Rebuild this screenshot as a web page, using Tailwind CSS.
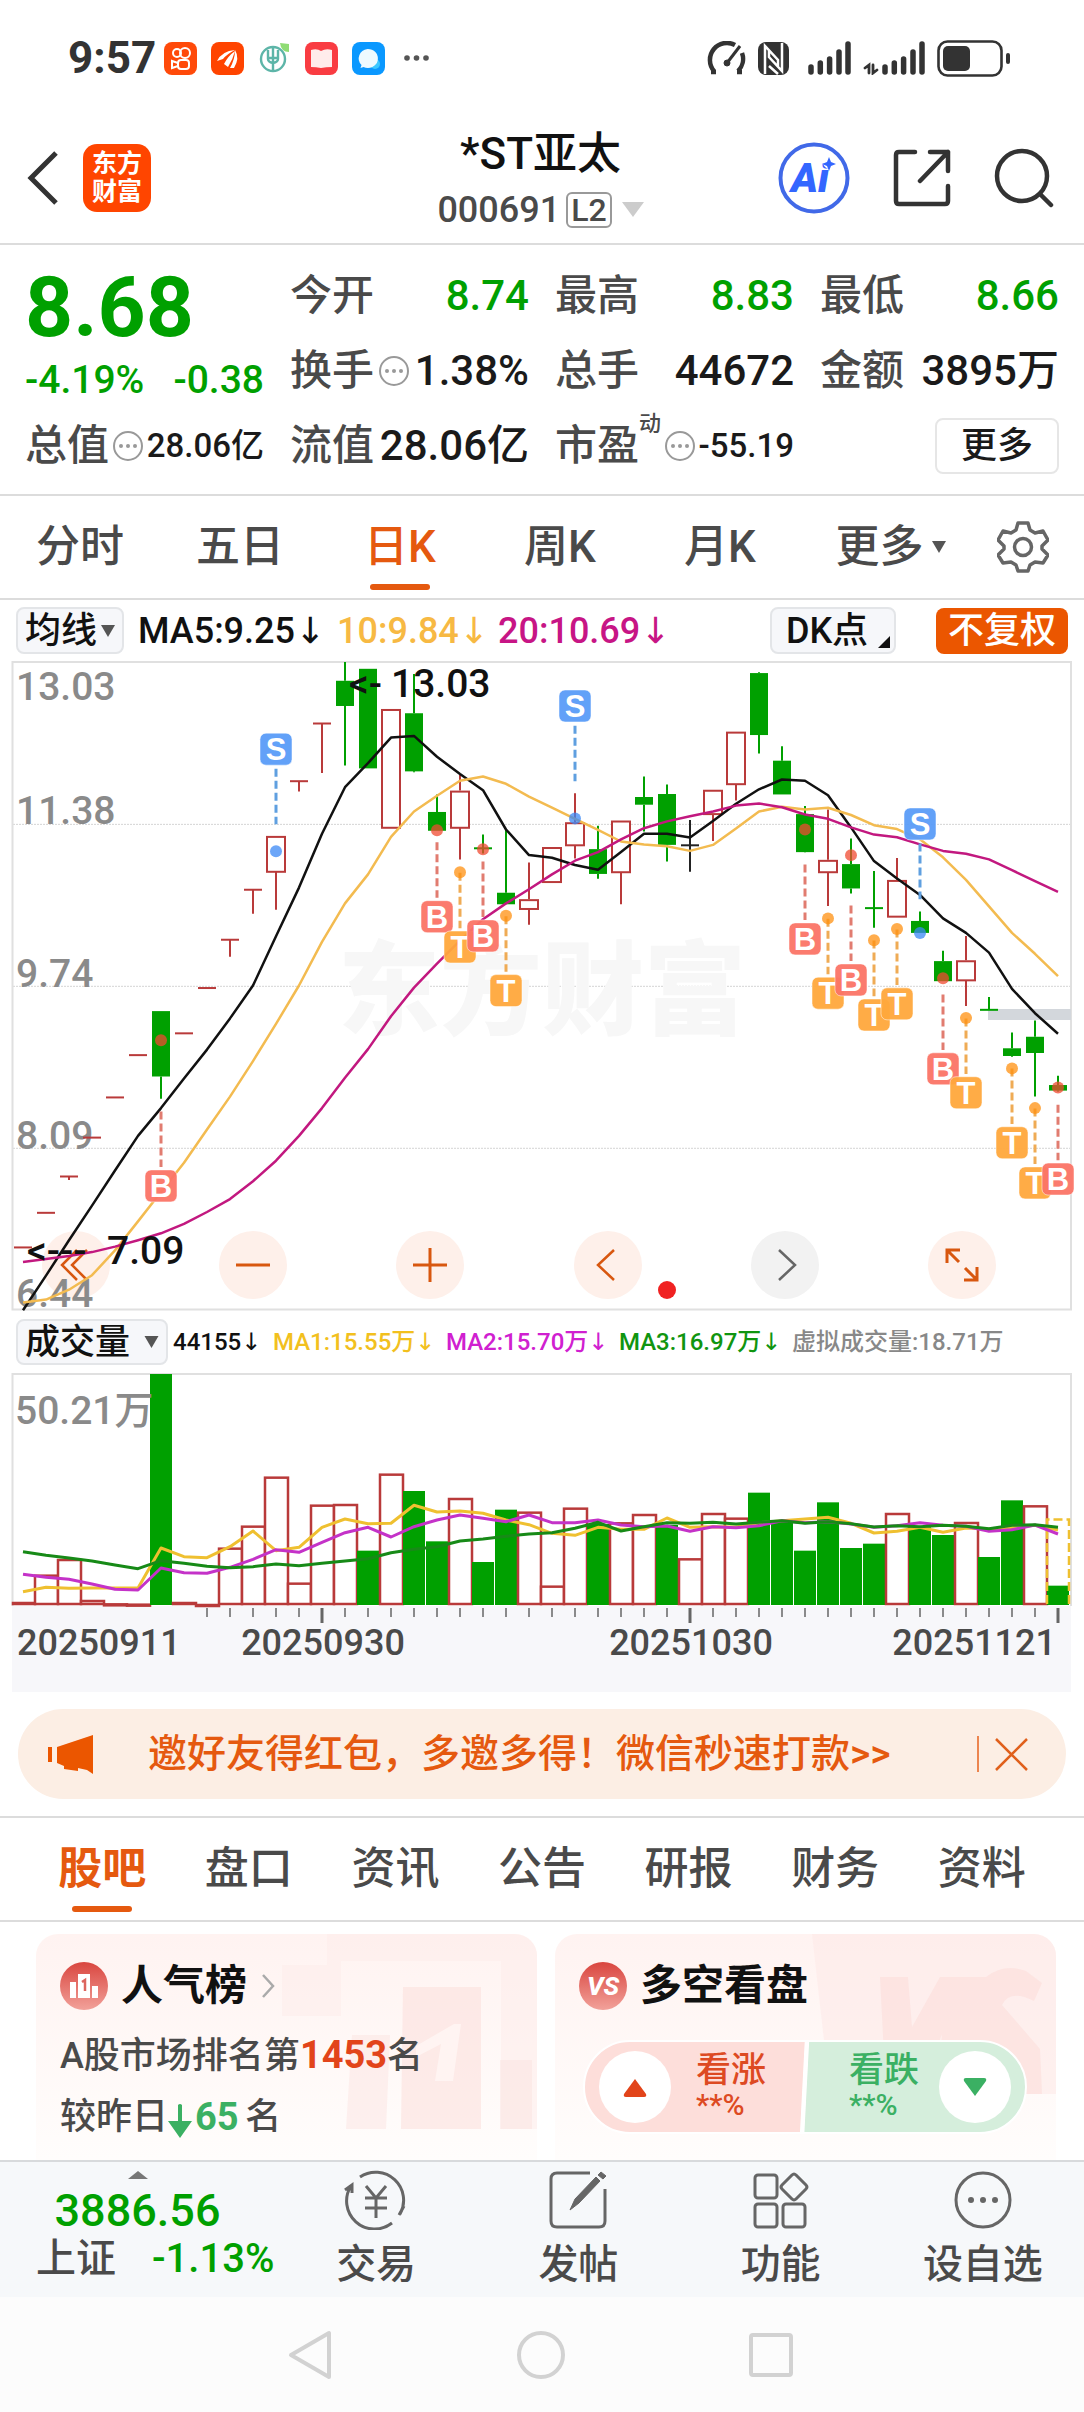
<!DOCTYPE html>
<html lang="zh-CN">
<head>
<meta charset="utf-8">
<meta name="viewport" content="width=device-width, initial-scale=1">
<title>*ST亚太 000691</title>
<script src="https://cdn.jsdelivr.net/npm/@tailwindcss/browser@4"></script>
</head>
<body class="min-h-screen flex flex-col bg-white font-['Roboto','Noto_Sans_CJK_SC',sans-serif] text-[#4a4a4a] font-medium leading-none">

<!-- system status bar -->
<div class="h-28 flex items-center justify-between pl-[68px] pr-[70px] pt-1 text-[#333]">
  <div class="flex items-center gap-[14px]">
    <span class="w-[82px] text-[44px] font-bold">9:57</span>
    <svg class="size-[33px]" viewBox="0 0 33 33" fill="none" stroke="#fff" stroke-width="2"><rect width="33" height="33" rx="8" fill="#ff4a0a" stroke="none"/><circle cx="13" cy="11" r="4"/><circle cx="21" cy="11" r="5"/><rect x="14" y="18" width="11" height="9" rx="3"/><path d="M14 21l-6-2v7l6-2"/></svg>
    <svg class="size-[33px]" viewBox="0 0 33 33"><rect width="33" height="33" rx="8" fill="#ff4400"/><path d="M6 19Q11 9 24 8Q16 12 12 17ZM13 22Q17 14 24 9Q22 17 17 25ZM19 26Q24 17 24 8Q29 16 23 26Z" fill="#fff"/></svg>
    <svg class="size-[33px]" viewBox="0 0 33 33" fill="none" stroke="#5db5a8" stroke-width="2.4"><circle cx="15" cy="17" r="12"/><path d="M15 5v24M10 8v9q0 3 5 4M20 8v9q0 3-5 4M11 16h8"/><path d="M22 1l9 1v8q-8 0-9-9z" fill="#8fdc74" stroke="none"/></svg>
    <svg class="size-[33px]" viewBox="0 0 33 33"><rect width="33" height="33" rx="8" fill="#f93c42"/><path d="M6 8q6-2 10 1q5-3 11-1v17q-6 0-11 1q-5-1-10-1z" fill="#ffeceb"/></svg>
    <svg class="size-[33px]" viewBox="0 0 33 33"><rect width="33" height="33" rx="8" fill="#0a98ff"/><circle cx="23" cy="22" r="5" fill="#3cc8ff"/><path d="M15.500 7a10 9.500 0 1 1-4 18l-3 1 1-3a10 9.500 0 0 1 6-16z" fill="#eefaff"/></svg>
    <svg class="w-[25px] h-[6px] ml-[5px]" viewBox="0 0 25 6" fill="#555"><circle cx="3" cy="3" r="2.800"/><circle cx="12.500" cy="3" r="2.800"/><circle cx="22" cy="3" r="2.800"/></svg>
  </div>
  <div class="flex items-center gap-3">
    <svg class="w-[39px] h-[34px]" viewBox="0 0 39 34" fill="none" stroke="#333" stroke-width="4.500"><path d="M4 31h5M7 30A17 17 0 0 1 28 4M35 12a17 17 0 0 1-4 18M30 31h5"/><path d="M20 22L33 5" stroke-width="3"/><circle cx="20" cy="22" r="3" fill="#333" stroke-width="1"/></svg>
    <svg class="w-[31px] h-[33px]" viewBox="0 0 31 33"><rect width="31" height="33" rx="8" fill="#333"/><path d="M7 32V4l13 14v6M24 1v28L11 15V8M11 24l9 8" fill="none" stroke="#fff" stroke-width="2.500"/></svg>
    <svg class="w-[43px] h-[34px] ml-[7px]" viewBox="0 0 43 34" stroke="#333" stroke-width="5.500" stroke-linecap="round"><path d="M3 26v5M12.300 22v9M21.600 18v13M31 11v20M40 3v28"/></svg>
    <svg class="w-[62px] h-[34px]" viewBox="0 0 62 34" stroke="#333" stroke-width="5.500" stroke-linecap="round" fill="none"><path d="M22 26v5M31.300 22v9M40.600 18v13M50 11v20M59 3v28"/><path d="M2 27l4-3v8M14 29l-4 3v-8" stroke-width="2.800"/></svg>
    <svg class="w-[77px] h-[37px]" viewBox="0 0 77 37"><rect x="1.500" y="1.500" width="63" height="34" rx="9" fill="none" stroke="#333" stroke-width="2.600"/><rect x="6" y="6" width="27" height="25" rx="5" fill="#333"/><rect x="69" y="13" width="4" height="11" rx="2" fill="#333"/></svg>
  </div>
</div>

<!-- stock header -->
<header class="h-[133px] pl-[27px] pr-[30px] grid grid-cols-[1fr_auto_1fr] items-center border-b-2 border-[#dcdcdc]">
  <div class="flex items-center gap-6">
    <button aria-label="返回"><svg class="w-8 h-[56px]" viewBox="0 0 32 56" fill="none" stroke="#333" stroke-width="5"><path d="M29 3L4 28l25 25"/></svg></button>
    <a href="#" class="size-[68px] rounded-[14px] bg-[#ff4500] text-white text-[25px] leading-7 font-bold flex items-center justify-center text-center">东方<br>财富</a>
  </div>
  <div class="flex flex-col items-center gap-4 pt-2">
    <h1 class="text-[44px] text-[#111]">*ST亚太</h1>
    <button class="flex items-center gap-[10px] text-[36px] mb-1">000691<span class="h-9 px-[3px] border-2 border-[#999] rounded-md text-[32px] flex items-center -ml-1">L2</span><svg class="w-[22px] h-[15px]" viewBox="0 0 22 15"><path d="M0 0h22L11 15z" fill="#ccc"/></svg></button>
  </div>
  <div class="flex items-center justify-end gap-[43px]">
    <button aria-label="AI"><svg class="size-[72px]" viewBox="0 0 72 72"><circle cx="36" cy="36" r="33.500" fill="none" stroke="#4169e8" stroke-width="4"/><text x="13" y="50" font-size="41" font-weight="900" font-style="italic" fill="#3366ff">Ai</text><circle cx="52" cy="20" r="7" fill="#fff"/><path d="M51 15l2 5 5 2-5 2-2 5-2-5-5-2 5-2z" fill="#3366ff"/></svg></button>
    <button aria-label="分享"><svg class="size-[58px]" viewBox="0 0 58 58" fill="none" stroke="#333" stroke-width="4.500" stroke-linecap="round" stroke-linejoin="round"><path d="M22 3H6q-3 0-3 3v46q0 3 3 3h46q3 0 3-3V37M37 3h18v19M55 3L27 32"/></svg></button>
    <button aria-label="搜索"><svg class="size-[60px]" viewBox="0 0 60 60" fill="none" stroke="#333" stroke-width="4.500" stroke-linecap="round"><circle cx="28" cy="28" r="25"/><path d="M46 46l11 11"/></svg></button>
  </div>
</header>

<!-- quote summary -->
<section class="px-[25px] pt-[13px] pb-[11px] grid grid-cols-4 grid-rows-[75px_75px_75px] gap-x-[26px] items-center border-b-2 border-[#dcdcdc] text-[42px]">
  <div class="row-span-2 self-stretch flex flex-col justify-between pt-[8px] pb-2 text-[#00a000]">
    <strong class="text-[84px] font-bold">8.68</strong>
    <div class="flex justify-between text-[39px]"><span>-4.19%</span><span>-0.38</span></div>
  </div>
  <div class="flex justify-between items-center"><span>今开</span><span class="text-[#00a000]">8.74</span></div>
  <div class="flex justify-between items-center"><span>最高</span><span class="text-[#00a000]">8.83</span></div>
  <div class="flex justify-between items-center"><span>最低</span><span class="text-[#00a000]">8.66</span></div>
  <div class="flex justify-between items-center"><span>换手</span><svg class="size-8" viewBox="0 0 32 32" fill="#999"><circle cx="16" cy="16" r="14" fill="none" stroke="#999" stroke-width="2"/><circle cx="9" cy="16" r="2"/><circle cx="16" cy="16" r="2"/><circle cx="23" cy="16" r="2"/></svg><span class="text-[#1a1a1a]">1.38%</span></div>
  <div class="flex justify-between items-center"><span>总手</span><span class="text-[#1a1a1a]">44672</span></div>
  <div class="flex justify-between items-center"><span>金额</span><span class="text-[#1a1a1a]">3895万</span></div>
  <div class="flex justify-between items-center"><span>总值</span><svg class="size-8" viewBox="0 0 32 32" fill="#999"><circle cx="16" cy="16" r="14" fill="none" stroke="#999" stroke-width="2"/><circle cx="9" cy="16" r="2"/><circle cx="16" cy="16" r="2"/><circle cx="23" cy="16" r="2"/></svg><span class="text-[#1a1a1a] text-[33px]">28.06亿</span></div>
  <div class="flex justify-between items-center"><span>流值</span><span class="text-[#1a1a1a]">28.06亿</span></div>
  <div class="flex justify-between items-center"><span class="flex">市盈<sup class="text-[22px] top-0 -mt-3 leading-none">动</sup></span><svg class="size-8" viewBox="0 0 32 32" fill="#999"><circle cx="16" cy="16" r="14" fill="none" stroke="#999" stroke-width="2"/><circle cx="9" cy="16" r="2"/><circle cx="16" cy="16" r="2"/><circle cx="23" cy="16" r="2"/></svg><span class="text-[#1a1a1a] text-[33px]">-55.19</span></div>
  <button class="justify-self-end w-[124px] h-14 border-2 border-[#e6e6e6] rounded-lg text-[36px] text-[#1a1a1a]">更多</button>
</section>

<!-- chart period -->
<nav class="h-[104px] grid grid-cols-[160fr_160fr_160fr_160fr_160fr_181fr_103fr] items-center justify-items-center border-b-2 border-[#dcdcdc] text-[44px]">
  <a href="#">分时</a>
  <a href="#">五日</a>
  <a href="#" class="relative text-[#e5590f]">日K<span class="absolute left-1/2 -ml-[30px] -bottom-[21px] w-[60px] h-[6px] rounded-full bg-[#e5590f]"></span></a>
  <a href="#">周K</a>
  <a href="#">月K</a>
  <a href="#" class="flex items-center gap-2">更多<svg class="w-[14px] h-3" viewBox="0 0 14 12"><path d="M0 0h14L7 12z" fill="#555"/></svg></a>
  <button aria-label="设置" class="pr-5"><svg class="size-[52px]" viewBox="0 0 52 52" fill="none" stroke="#666" stroke-width="3.500" stroke-linejoin="round"><path d="M21 2h10l2 7 5 3 8-2 5 9-6 6v3l6 6-5 8-8-1-5 3-2 6H21l-2-6-5-3-8 1-5-8 6-6v-3l-6-6 5-9 8 2 5-3z"/><circle cx="26" cy="26" r="8.500"/></svg></button>
</nav>

<!-- moving average legend -->
<div class="h-[61px] pl-4 pr-4 flex items-center text-[36px] text-[#111] whitespace-nowrap">
  <button class="w-[108px] h-[47px] flex items-center justify-center gap-1 rounded-lg border-2 border-[#e3e5e8] bg-[#f6f7fa]">均线<svg class="w-[14px] h-3" viewBox="0 0 14 12"><path d="M0 0h14L7 12z" fill="#555"/></svg></button>
  <span class="ml-[14px] w-[199px]">MA5:9.25<span class="font-['DejaVu_Sans']">↓</span></span>
  <span class="w-[161px] text-[#f7b943]">10:9.84<span class="font-['DejaVu_Sans']">↓</span></span>
  <span class="text-[#c71585]">20:10.69<span class="font-['DejaVu_Sans']">↓</span></span>
  <button class="relative ml-auto w-[126px] h-[47px] pr-3 rounded-lg border-2 border-[#e3e5e8] bg-[#f6f7fa]">DK点<svg class="absolute right-1 bottom-1 size-3" viewBox="0 0 12 12"><path d="M12 0v12H0z" fill="#111"/></svg></button>
  <button class="ml-10 w-[132px] h-[46px] rounded-lg bg-[#eb5600] text-white">不复权</button>
</div>

<!-- candlestick chart: the drawing lies over the buttons and lets clicks through -->
<section class="relative">
  <svg id="price" class="relative z-10 pointer-events-none w-full h-auto block" viewBox="0 661 1084 650" role="img" aria-label="日K线图"></svg>
  <div class="absolute left-[42px] right-[88px] bottom-[12px] flex justify-between">
    <button aria-label="最左" class="size-[68px] rounded-full bg-[#fef0ea] flex items-center justify-center"><svg class="size-8 -ml-1" viewBox="0 0 32 32" fill="none" stroke="#d8570f" stroke-width="2.500"><path d="M19 1L4 16l15 15M29 1L14 16l15 15"/></svg></button>
    <button aria-label="缩小" class="size-[68px] rounded-full bg-[#fef0ea] flex items-center justify-center"><svg class="size-[34px]" viewBox="0 0 34 34" stroke="#d8570f" stroke-width="3"><path d="M0 17h34"/></svg></button>
    <button aria-label="放大" class="size-[68px] rounded-full bg-[#fef0ea] flex items-center justify-center"><svg class="size-[34px]" viewBox="0 0 34 34" stroke="#d8570f" stroke-width="3"><path d="M0 17h34M17 0v34"/></svg></button>
    <button aria-label="左移" class="size-[68px] rounded-full bg-[#fef0ea] flex items-center justify-center"><svg class="size-8" viewBox="0 0 32 32" fill="none" stroke="#d8570f" stroke-width="2.500"><path d="M22 1L6 16l16 15"/></svg></button>
    <button aria-label="右移" class="size-[68px] rounded-full bg-[#f2f2f2] flex items-center justify-center"><svg class="size-8" viewBox="0 0 32 32" fill="none" stroke="#666" stroke-width="2.500"><path d="M10 1l16 15-16 15"/></svg></button>
    <button aria-label="全屏" class="size-[68px] rounded-full bg-[#fef0ea] flex items-center justify-center"><svg class="size-[34px]" viewBox="0 0 34 34" fill="none" stroke="#d8570f" stroke-width="3"><path d="M2 15V2h13M2 2l12 12M32 19v13H19M32 32L20 20"/></svg></button>
  </div>
</section>

<!-- volume legend -->
<div class="h-[62px] pl-4 flex items-center text-[24px] whitespace-nowrap">
  <button class="w-[152px] h-[46px] flex items-center justify-center gap-[14px] rounded-lg border-2 border-[#e3e5e8] bg-[#f6f7fa] text-[35px] text-[#111]">成交量<svg class="w-[15px] h-3" viewBox="0 0 14 12"><path d="M0 0h14L7 12z" fill="#555"/></svg></button>
  <span class="ml-[5px] w-[100px] text-[#111]">44155<span class="font-['DejaVu_Sans']">↓</span></span>
  <span class="w-[173px] text-[#f2c01e]">MA1:15.55万<span class="font-['DejaVu_Sans']">↓</span></span>
  <span class="w-[173px] text-[#d020d0]">MA2:15.70万<span class="font-['DejaVu_Sans']">↓</span></span>
  <span class="w-[173px] text-[#109510]">MA3:16.97万<span class="font-['DejaVu_Sans']">↓</span></span>
  <span class="text-[#888]">虚拟成交量:18.71万</span>
</div>

<!-- volume chart -->
<svg id="volume" class="w-full h-auto block" viewBox="0 1373 1084 319" role="img" aria-label="成交量图"></svg>

<!-- promotion -->
<aside class="mx-[18px] mt-[17px] mb-[17px] h-[90px] rounded-full bg-[#fceee4] pl-[30px] pr-[38px] flex items-center text-[#e5590f]">
  <svg class="w-[46px] h-[39px]" viewBox="0 0 46 39" fill="#eb5600"><path d="M0 12h4v15H0zM9 12L45 0v39l-6-4-9-2v3l-14-2v-3l-7-3z"/></svg>
  <a href="#" class="ml-[54px] text-[39px]">邀好友得红包，多邀多得！微信秒速打款&gt;&gt;</a>
  <span class="ml-auto w-[2px] h-9 bg-[#e5590f]/70"></span>
  <button aria-label="关闭" class="ml-[16px]"><svg class="size-[33px]" viewBox="0 0 33 33" stroke="#e0601c" stroke-width="2.500"><path d="M1 1l31 31M32 1L1 32"/></svg></button>
</aside>

<!-- content tabs -->
<nav class="h-[106px] px-[29px] grid grid-cols-7 items-center justify-items-center border-y-2 border-[#dcdcdc] text-[44px]">
  <a href="#" class="relative font-bold text-[#e5590f]">股吧<span class="absolute left-1/2 -ml-[30px] -bottom-[21px] w-[60px] h-[6px] rounded-full bg-[#e5590f]"></span></a>
  <a href="#">盘口</a>
  <a href="#">资讯</a>
  <a href="#">公告</a>
  <a href="#">研报</a>
  <a href="#">财务</a>
  <a href="#">资料</a>
</nav>

<!-- cards -->
<main class="grow grid grid-cols-2 gap-[18px] pl-9 pr-7 pt-3">
  <section class="relative overflow-hidden rounded-t-[22px] bg-linear-to-b from-[#fff3f1] to-[#fffdfc] px-6 pt-[28px]">
    <svg class="absolute right-0 top-0 h-[205px] w-[260px]" viewBox="0 0 260 205"><path d="M50 0h210v195h-36V27H64v55H5V31h45z" fill="#fdecea" opacity=".5"/><path d="M126 53h78v142h-80z" fill="#fbdedb" opacity=".55"/><path d="M75 101h38l-4 94H69zM223 126h32v69h-32z" fill="#fbdedb" opacity=".4"/><path d="M139 112l38-22h7l-8 57h-18l6-37-25 13z" fill="#fff4f2"/></svg>
    <div class="relative flex flex-col gap-[27px] text-[36px]">
      <h2 class="flex items-center gap-[13px] text-[42px] font-bold text-[#111]"><svg class="size-12" viewBox="0 0 48 48"><defs><linearGradient id="r" x2="0" y2="1"><stop stop-color="#d9463f"/><stop offset="1" stop-color="#f2a19a"/></linearGradient></defs><circle cx="24" cy="24" r="24" fill="url(#r)"/><path d="M18 12h12v24H18zM10 20h6v16h-6zM32 24h6v12h-6z" fill="#fff"/><path d="M22 20l3-2v11" fill="none" stroke="#dd655e" stroke-width="2.500"/></svg>人气榜<svg class="w-4 h-6" viewBox="0 0 16 24" fill="none" stroke="#aaa" stroke-width="2.500"><path d="M3 1l10 11L3 23"/></svg></h2>
      <div class="flex flex-col gap-[21px]">
        <p class="leading-9">A股市场排名第<strong class="text-[38px] text-[#e2441a]">1453</strong>名</p>
        <p class="leading-9 flex items-center">较昨日<svg class="w-6 h-9 mt-2" viewBox="0 0 24 36" fill="#3bb063"><path d="M10 2q2-2 4 0v16h10L12 35 0 18h10z"/></svg><strong class="mx-[3px] text-[38px] font-bold text-[#3bb063]">65</strong>&hairsp;名</p>
      </div>
    </div>
  </section>
  <section class="relative overflow-hidden rounded-t-[22px] bg-linear-to-b from-[#fff3f1] to-[#fffdfc] px-6 pt-[28px]">
    <svg class="absolute right-0 top-0 h-[160px] w-[246px]" viewBox="0 0 246 160"><path d="M2 0h244v160H20z" fill="#fdeae7" opacity=".6"/><path d="M70 43h28l4 50 28-50h46q18-14 40-6l16 12-8 18q-24-12-32 4l38 44 2 45h-104l4-60-22 60H76z" fill="#fbdeda" opacity=".6"/></svg>
    <div class="relative flex flex-col gap-[30px]">
      <h2 class="flex items-center gap-[13px] text-[42px] font-bold text-[#111]"><svg class="size-12" viewBox="0 0 48 48"><circle cx="24" cy="24" r="24" fill="url(#r)"/><text x="24" y="33" text-anchor="middle" font-size="26" font-weight="800" font-style="italic" fill="#fff">VS</text></svg>多空看盘</h2>
      <div class="relative h-[94px] rounded-full border-2 border-white ml-1 mr-[5px] bg-[linear-gradient(93deg,#fddeda_0_49.300%,#fff_49.500%_50.300%,#d5eedc_50.500%)] flex items-center justify-between px-[14px] text-[35px]">
        <button class="flex items-center gap-[25px] text-left text-[#dd4a22]"><span class="size-[72px] rounded-full bg-white flex items-center justify-center"><svg class="w-6 h-[19px]" viewBox="0 0 24 19"><path d="M12 1L23 16q1 3-2 3H3q-3 0-2-3z" fill="#e2441a"/></svg></span><span>看涨<span class="block text-[30px] leading-[34px]">**%</span></span></button>
        <button class="flex items-center gap-[20px] text-left text-[#3bb063]"><span>看跌<span class="block text-[30px] leading-[34px]">**%</span></span><span class="size-[72px] rounded-full bg-white flex items-center justify-center"><svg class="w-6 h-[19px]" viewBox="0 0 24 19"><path d="M12 18L23 3q1-3-2-3H3Q0 0 1 3z" fill="#3bb063"/></svg></span></button>
      </div>
    </div>
  </section>
</main>

<!-- action bar -->
<footer class="h-[137px] flex bg-[#f6f8fa] border-t-2 border-[#d8dadc] text-[40px]">
  <a href="#" class="w-[275px] pt-[9px] flex flex-col items-center text-[#00a000]">
    <svg class="w-5 h-2" viewBox="0 0 20 8"><path d="M10 0l10 8H0z" fill="#777"/></svg>
    <span class="mt-[9px] text-[45px]">3886.56</span>
    <span class="mt-[6px] ml-[36px] self-start flex items-center gap-9"><span class="text-[#4a4a4a]">上证</span><span>-1.13%</span></span>
  </a>
  <a href="#" class="flex-1 pt-[8px] flex flex-col items-center gap-[15px]"><svg class="w-[66px] h-[60px]" viewBox="0 0 66 60" fill="none" stroke="#666" stroke-width="3"><path d="M17 7A28 28 0 0 1 57 44M61 36l-5 9M49 53A28 28 0 0 1 8 16M2 20l7-5v8"/><path d="M23 16l10 12 10-12M22 28h22M22 38h22M33 28v20"/></svg>交易</a>
  <a href="#" class="flex-1 pt-[8px] flex flex-col items-center gap-[15px]"><svg class="size-[60px]" viewBox="0 0 60 60" fill="none" stroke="#666" stroke-width="3"><path d="M42 3H9q-6 0-6 6v42q0 6 6 6h42q6 0 6-6V19"/><path d="M22 40l5-11L48 7l4 4-21 22zM50 5l3-3 5 4-3 3z" fill="#666" stroke-width="1"/></svg>发帖</a>
  <a href="#" class="flex-1 pt-[8px] flex flex-col items-center gap-[15px]"><svg class="size-[60px]" viewBox="0 0 60 60" fill="none" stroke="#666" stroke-width="3"><rect x="4" y="5" width="22" height="23" rx="3"/><rect x="4" y="34" width="22" height="23" rx="3"/><rect x="32" y="34" width="22" height="23" rx="3"/><path d="M41 5q2-2 4 0l10 10q2 2 0 4L45 29q-2 2-4 0L31 19q-2-2 0-4z"/></svg>功能</a>
  <a href="#" class="flex-1 pt-[8px] flex flex-col items-center gap-[15px]"><svg class="size-[60px]" viewBox="0 0 60 60" fill="#666"><circle cx="30" cy="30" r="27" fill="none" stroke="#666" stroke-width="3"/><circle cx="18" cy="30" r="3"/><circle cx="30" cy="30" r="3"/><circle cx="42" cy="30" r="3"/></svg>设自选</a>
</footer>

<!-- system navigation -->
<div class="h-[115px] grid grid-cols-[426fr_230fr_428fr] items-center bg-[#fcfcfc]">
  <button aria-label="返回" class="justify-self-end mr-[94px]"><svg class="w-[44px] h-[50px]" viewBox="0 0 44 50" fill="none" stroke="#d2d2d2" stroke-width="4" stroke-linejoin="round"><path d="M41 3v44L3 25z"/></svg></button>
  <button aria-label="主页" class="justify-self-center"><svg class="size-[50px]" viewBox="0 0 50 50" fill="none" stroke="#d2d2d2" stroke-width="4"><circle cx="25" cy="25" r="22"/></svg></button>
  <button aria-label="最近" class="justify-self-start ml-[92px]"><svg class="size-[46px]" viewBox="0 0 46 46" fill="none" stroke="#d2d2d2" stroke-width="4"><rect x="3" y="3" width="40" height="40" rx="2"/></svg></button>
</div>

<script>
const RED = '#b93a3a', GREEN = '#00a000';
const X = i => 23 + 23 * i;
const rect = (x, y, w, h, a) => `<rect x="${x}" y="${y}" width="${w}" height="${h}" ${a}/>`;
const line = (x1, y1, x2, y2, a) => `<line x1="${x1}" y1="${y1}" x2="${x2}" y2="${y2}" ${a}/>`;
const text = (x, y, s, a) => `<text x="${x}" y="${y}" ${a}>${s}</text>`;
const poly = (vals, Y, c, w) => `<polyline points="${vals.map((v, i) => X(i) + ',' + Y(v).toFixed(1)).join(' ')}" fill="none" stroke="${c}" stroke-width="${w}" stroke-linejoin="round"/>`;

// price panel: [colour, high, body top, body bottom, low]
const P = v => 650 + v / 2.34;
const candles = [
 ['r',1398,1398,1398,1398],['r',1317,1317,1317,1317],['r',1232,1232,1232,1240],['r',1141,1141,1141,1141],['r',1047,1047,1047,1047],['r',948,948,948,948],
 ['g',845,845,998,1050],['r',897,897,897,897],['r',791,791,791,791],['r',678,678,678,718],['r',561,561,561,617],['r',435,435,519,608],
 ['r',307,307,307,331],['r',172,172,172,288],['g',28,72,131,270],['g',44,44,277,277],['r',138,138,416,416],['g',56,148,284,286],
 ['g',338,379,423,423],['r',292,329,416,490],['g',432,464,464,476],['g',420,568,595,595],['r',497,583,606,643],['r',461,461,543,543],
 ['r',335,403,457,488],['g',411,466,524,535],['r',399,399,520,595],['g',296,344,362,425],['g',315,337,456,495],['k',398,457,457,519],
 ['r',327,327,384,447],['r',191,191,314,352],['g',52,54,199,242],['g',225,259,338,338],['g',365,384,473,474],['r',373,491,520,599],
 ['g',441,501,558,570],['g',517,604,604,650],['r',487,538,624,624],['g',612,634,662,662],['g',704,728,775,775],['r',669,726,773,833],
 ['g',812,842,842,842],['g',895,932,950,952],['g',867,905,943,1045],['g',996,1018,1031,1033]];
const ma5 = [1545,1464,1381,1300,1218,1137,1072,1003,935,862,785,670,556,430,321,265,205,201,250,290,328,420,480,486,503,514,473,430,430,439,400,360,326,303,306,340,415,494,535,573,628,662,708,793,850,898];
const ma10 = [1527,1520,1497,1463,1405,1337,1268,1200,1122,1045,962,875,785,683,593,525,437,378,341,306,296,313,343,369,395,421,448,455,459,470,456,418,378,367,373,369,386,410,419,443,485,538,600,662,711,763];
const ma20 = [1432,1425,1418,1409,1396,1381,1365,1343,1315,1285,1243,1195,1137,1072,1001,934,857,790,734,680,630,593,560,525,493,473,443,417,401,389,378,364,359,368,385,395,415,432,438,455,470,477,490,515,541,566];
// trade marks: [index, letter, dot, badge]
const marks = [[11,'S',471,232],[24,'S',394,131],[39,'S',662,407],[6,'B',913,1254],[18,'B',422,624],[19,'T',520,695],[20,'B',466,669],[21,'T',622,797],[34,'B',420,676],[35,'T',628,803],[36,'B',480,772],[37,'T',679,854],[38,'T',653,828],[40,'B',768,980],[41,'T',861,1036],[43,'T',979,1153],[44,'T',1072,1247],[45,'B',1024,1238]];

let s = '';
[408, 787, 1166].forEach(v => s += line(13, P(v), 1071, P(v), 'stroke="#d4d4d4" stroke-dasharray="2 1"'));
s += text(338, 1027, '东方财富', 'font-size="102" font-weight="900" fill="#f7f7f7"');
s += '<path d="M12.500 1309.500V662H1071V1309.500Z" fill="none" stroke="#e0e0e0" stroke-width="2"/>';
[[13.03,118],[11.38,408],[9.74,788],[8.09,1167],[6.44,1537]].forEach(([n, v]) => s += text(16, P(v), n.toFixed(2), 'font-size="39" fill="#8a8a8a"'));
s += rect(988, 1009, 83, 11, 'fill="#d3d7dc"');
candles.forEach(([c, hi, t, b, lo], i) => {
  const k = c === 'r' ? RED : c === 'g' ? GREEN : '#222', w = `stroke="${k}" stroke-width="2"`;
  if (hi < t) s += line(X(i), P(hi), X(i), P(t), w);
  if (lo > b) s += line(X(i), P(b), X(i), P(lo), w);
  if (t === b) s += line(X(i) - 9, P(t), X(i) + 9, P(t), w);
  else if (c === 'r') s += rect(X(i) - 9, P(t) + 1, 18, P(b) - P(t) - 1, `fill="#fff" stroke="${RED}" stroke-width="2"`);
  else s += rect(X(i) - 9, P(t), 18, P(b) - P(t), `fill="${k}"`);
});
s += poly(ma5, P, '#111', 2.5) + poly(ma10, P, '#f3bb50', 2.5) + poly(ma20, P, '#c2187f', 2.5);
const tone = { S: ['#5a9cf8', '#5f9fe0'], B: ['#fb7466', '#e17c70'], T: ['#ffa83c', '#efab55'] };
marks.forEach(([i, ch, dot, b]) => {
  const [from, to] = ch === 'S' ? [b + 46, b + 176] : [b - 174, b - 44];
  s += line(X(i), P(from), X(i), P(to), `stroke="${tone[ch][1]}" stroke-width="3" stroke-dasharray="8 4"`);
  s += `<circle cx="${X(i)}" cy="${P(dot)}" r="6" fill="${ch === 'B' ? '#f04a30' : ch === 'T' ? '#ff9010' : '#3b88f5'}" opacity=".75"/>`;
  s += rect(X(i) - 16, P(b) - 16, 32, 32, `rx="6" fill="${tone[ch][0]}" fill-opacity=".95" stroke="#fff" stroke-opacity=".5"`);
  s += text(X(i), P(b) + 11, ch, 'text-anchor="middle" font-family="Liberation Sans" font-size="31" font-weight="700" fill="#fff"');
});
s += text(349, 697, '&lt;-<tspan x="391">13.03</tspan>', 'font-size="39" fill="#111"');
s += text(27, 1264, '&lt;---<tspan x="107">7.09</tspan>', 'font-size="39" fill="#111"');
s += '<circle cx="667" cy="1290" r="9" fill="#f02222"/>';
document.getElementById('price').innerHTML = s;

// volume panel
const V = v => 1300 + v / 3;
const kinds = 'rrrrrrgrrrrrrrrgrggrggrrrgrrgrrrggggggrggrggrg';
const tops = [906,824,777,900,910,911,222,906,912,743,677,530,848,614,612,752,521,573,724,594,786,629,635,857,623,672,667,642,675,775,639,653,578,665,752,607,744,731,639,682,705,666,771,601,616,857];
const v1 = [875,862,865,864,864,864,744,770,773,740,693,752,742,682,657,671,670,616,636,633,640,660,674,700,706,682,688,688,654,682,680,681,668,662,657,652,670,699,694,682,697,684,688,682,676,690];
const v2 = [823,832,838,852,868,870,804,818,820,802,778,749,757,727,698,682,711,680,660,645,655,665,645,668,668,660,675,680,678,694,680,683,677,662,668,665,672,682,677,668,676,679,694,689,675,702];
const v3 = [755,766,774,783,795,806,782,790,799,803,800,792,797,790,783,776,758,748,740,723,717,709,702,698,685,667,693,680,668,670,667,672,667,662,670,665,671,681,677,680,676,679,686,676,674,682];
s = rect(12, 1606, 1059, 86, 'fill="#f7f7fa"') + '<path d="M12.500 1606V1374H1071V1606" fill="none" stroke="#e0e0e0" stroke-width="2"/>';
tops.forEach((t, i) => {
  const y = V(t), h = 1605 - y;
  if (kinds[i] === 'g') s += rect(X(i) - 11, y, 22, h, `fill="${GREEN}"`);
  else s += rect(X(i) - (i ? 11 : 10), y + 1, i ? 23 : 22, Math.max(h - 2, 1), `fill="#fff" stroke="${RED}" stroke-width="2.500"`);
});
s += '<path d="M1047 1604V1519.500H1069V1604" fill="none" stroke="#efc030" stroke-width="2.500" stroke-dasharray="9 4"/>';
s += poly(v1, V, '#efc030', 3) + poly(v2, V, '#c432c8', 3) + poly(v3, V, '#178a17', 3);
s += text(15, 1424, '50.21万', 'font-size="39" fill="#8a8a8a"');
for (let i = 8; i < 46; i++) {
  const big = i === 13 || i === 29 || i === 45;
  s += line(X(i), 1608, X(i), big ? 1623 : 1617, `stroke="#666" stroke-width="${big ? 3 : 1.5}"`);
}
[[17,'20250911','start'],[323,'20250930','middle'],[691,'20251030','middle'],[1056,'20251121','end']].forEach(([x, d, a]) => s += text(x, 1655, d, `text-anchor="${a}" font-size="36" fill="#4a4a4a"`));
document.getElementById('volume').innerHTML = s;
</script>
</body>
</html>
